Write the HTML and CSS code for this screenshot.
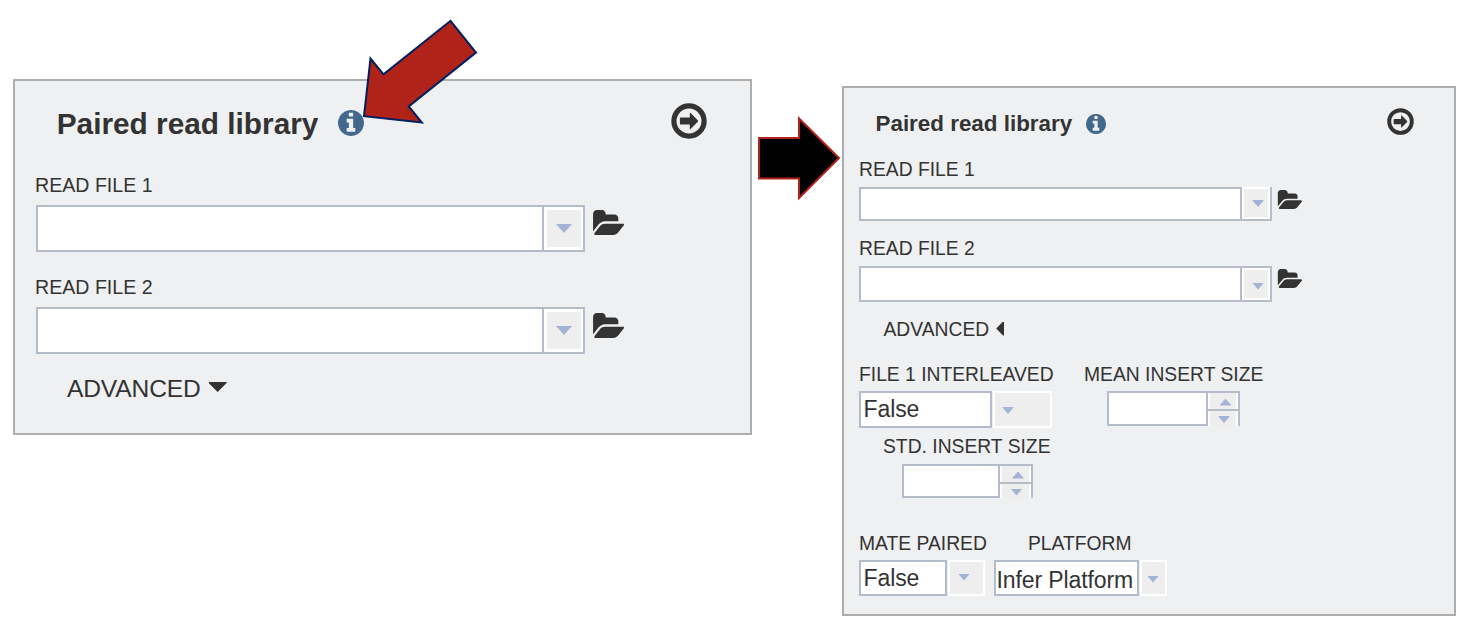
FILE: index.html
```html
<!DOCTYPE html>
<html lang="en">
<head>
<meta charset="utf-8">
<title>Paired read library</title>
<link rel="stylesheet" href="styles.css">
</head>
<body>
<svg class="defs" aria-hidden="true">
  <symbol id="info" viewBox="128 128 1536 1536"><path d="M1152 1376v-160q0-14-9-23t-23-9h-96v-512q0-14-9-23t-23-9h-320q-14 0-23 9t-9 23v160q0 14 9 23t23 9h96v320h-96q-14 0-23 9t-9 23v160q0 14 9 23t23 9h448q14 0 23-9t9-23zm-128-896v-160q0-14-9-23t-23-9h-192q-14 0-23 9t-9 23v160q0 14 9 23t23 9h192q14 0 23-9t9-23zm640 416q0 209-103 385.500t-279.500 279.500-385.500 103-385.500-103-279.500-279.500-103-385.500 103-385.500 279.500-279.500 385.500-103 385.500 103 279.500 279.500 103 385.500z"/></symbol>
  <symbol id="folder" viewBox="0 128 1943 1408" preserveAspectRatio="none"><path d="M1943 952q0 31-31 66l-336 396q-43 51-120.500 86.500t-143.500 35.500h-1088q-34 0-60.500-13t-26.500-43q0-31 31-66l336-396q43-51 120.500-86.500t143.500-35.500h1088q34 0 60.500 13t26.500 43zm-343-344v160h-832q-94 0-197 47.500t-164 119.500l-337 396-5 6q0-4-.5-12.500t-.5-12.500v-960q0-92 66-158t158-66h320q92 0 158 66t66 158v32h544q92 0 158 66t66 158z"/></symbol>
  <symbol id="go" viewBox="0 0 36 36"><circle cx="18" cy="18" r="15.100" fill="none" stroke="currentColor" stroke-width="5.200"/><path d="M9.500 14.500h9.300V10.300q0-.9.800-.4l7.200 7.400q.6.700 0 1.400l-7.200 7.400q-.8.500-.8-.4v-4.200H9.500q-.6 0-.6-.6v-5.800q0-.6.600-.6z"/></symbol>
</svg>

<main class="stage">
  <section class="panel panel-small">
    <header class="head">
      <h2 class="title">Paired read library</h2>
      <svg class="info"><use href="#info"/></svg>
      <svg class="go"><use href="#go"/></svg>
    </header>
    <div class="label">READ FILE 1</div>
    <div class="file">
      <div class="combo"><div class="entry"></div><div class="drop"><i class="tri down"></i></div></div>
      <svg class="folder"><use href="#folder"/></svg>
    </div>
    <div class="label second">READ FILE 2</div>
    <div class="file">
      <div class="combo"><div class="entry"></div><div class="drop"><i class="tri down"></i></div></div>
      <svg class="folder"><use href="#folder"/></svg>
    </div>
    <div class="advanced">ADVANCED<i class="caret caret-down"></i></div>
  </section>

  <section class="panel panel-large">
    <header class="head">
      <h2 class="title">Paired read library</h2>
      <svg class="info"><use href="#info"/></svg>
      <svg class="go"><use href="#go"/></svg>
    </header>
    <div class="label">READ FILE 1</div>
    <div class="file file-open">
      <div class="combo"><div class="entry"></div><div class="drop"><i class="tri down"></i></div></div>
      <svg class="folder"><use href="#folder"/></svg>
    </div>
    <div class="label second">READ FILE 2</div>
    <div class="file file-second">
      <div class="combo"><div class="entry"></div><div class="drop"><i class="tri down"></i></div></div>
      <svg class="folder"><use href="#folder"/></svg>
    </div>
    <div class="advanced">ADVANCED<i class="caret caret-left"></i></div>

    <div class="options">
      <div class="option interleaved">
        <div class="label">FILE 1 INTERLEAVED</div>
        <div class="select"><div class="value">False</div><div class="arrow"><i class="tri down"></i></div></div>
      </div>
      <div class="option mean">
        <div class="label">MEAN INSERT SIZE</div>
        <div class="spinner"><div class="number"></div><div class="steps"><div class="step"><i class="tri up"></i></div><div class="step"><i class="tri down"></i></div></div></div>
      </div>
    </div>
    <div class="option std">
      <div class="label">STD. INSERT SIZE</div>
      <div class="spinner"><div class="number"></div><div class="steps"><div class="step"><i class="tri up"></i></div><div class="step"><i class="tri down"></i></div></div></div>
    </div>
    <div class="options options-last">
      <div class="option mate">
        <div class="label">MATE PAIRED</div>
        <div class="select"><div class="value">False</div><div class="arrow"><i class="tri down"></i></div></div>
      </div>
      <div class="option platform">
        <div class="label">PLATFORM</div>
        <div class="select"><div class="value">Infer Platform</div><div class="arrow"><i class="tri down"></i></div></div>
      </div>
    </div>
  </section>

  <svg class="pointer" viewBox="0 0 120 110"><path d="M90.500 10.800 116 42.500 48.700 96.500 61.800 112.500 4 106.200 10.500 48.500 23.500 64.300z"/></svg>
  <svg class="next" viewBox="0 0 84 86"><path d="M2 23H42V3.500L82 43 42 83V63.500H2z"/></svg>
</main>
</body>
</html>
```
FILE: styles.css
```css
* { box-sizing: border-box; }
body {
  margin: 0;
  background: #fff;
  color: #333;
  font-family: "Liberation Sans", Arial, sans-serif;
}
.defs { position: absolute; width: 0; height: 0; }
svg { display: block; flex: none; fill: currentColor; }
.stage {
  position: relative;
  display: flex;
  align-items: flex-start;
  gap: 90px;
  width: 1472px;
  height: 632px;
  padding: 79px 0 0 13px;
  overflow: hidden;
}
.panel { flex: none; background: #eff0f2; border: 2px solid #adadad; }
.panel-small { width: 739px; height: 356px; padding-left: 21px; }
.panel-large { width: 614px; height: 530px; margin-top: 7px; padding-left: 15px; }

.head { display: flex; align-items: center; }
.title { margin: 0; font-weight: bold; white-space: nowrap; }
.info { color: #42698d; }
.label { height: 24px; line-height: 24px; white-space: nowrap; }
.file { display: flex; align-items: flex-start; }
.combo { display: flex; border: 2px solid #b5bcc9; background: #fff; }
.entry { flex: 1; background: #fff; }
.drop {
  display: flex;
  justify-content: center;
  align-items: center;
  border: 2px solid #fff;
  background: #eee;
  box-shadow: -2px 0 #b5bcc9;
}
.advanced { display: flex; align-items: center; }

.tri { display: block; width: 12px; height: 7px; background: #a2b3d3; }
.down { clip-path: polygon(0 0, 100% 0, 50% 100%); }
.up { clip-path: polygon(50% 0, 100% 100%, 0 100%); }
.caret { display: block; background: #333; }
.caret-down { clip-path: polygon(0 0, 100% 0, 100% 10%, 50% 100%, 0 10%); }
.caret-left { clip-path: polygon(100% 0, 100% 100%, 85% 100%, 0 50%, 85% 0); }

/* Collapsed panel */
.panel-small .head { height: 84px; margin-bottom: 8px; }
.panel-small .title { width: 283px; margin: 2px 0 0 20px; font-size: 29.8px; line-height: 36px; text-indent: .7px; }
.panel-small .info { width: 26px; height: 26px; margin-left: -1px; }
.panel-small .go { width: 36px; height: 36px; margin: 0 0 4px 307px; }
.panel-small .label { margin-left: -1px; font-size: 19.6px; }
.panel-small .second { margin-top: 23px; }
.panel-small .file { margin-top: 8px; }
.panel-small .combo { width: 549px; height: 47px; }
.panel-small .drop { width: 39px; border-width: 3px 2px 3px 3px; }
.panel-small .drop .tri { width: 16px; height: 9px; }
.panel-small .folder { width: 32px; height: 25px; margin: 5px 0 0 7px; }
.panel-small .file:nth-of-type(4) .folder { margin-top: 6px; }
.panel-small .advanced { height: 30px; margin: 20px 0 0 31px; font-size: 24.6px; letter-spacing: -.15px; line-height: 30px; }
.panel-small .caret { width: 18px; height: 10px; margin: 0 0 4px 8px; }

/* Expanded panel */
.panel-large .head { height: 69px; }
.panel-large .title { width: 211px; margin: 3px 0 0 16px; font-size: 22.4px; line-height: 28px; text-indent: .5px; }
.panel-large .info { width: 20px; height: 20px; margin: 2px 0 0; }
.panel-large .go { width: 27px; height: 27px; margin: 0 0 3px 281px; }
.panel-large .label { font-size: 19.3px; line-height: 26px; }
.panel-large > .second { margin-top: 15px; }
.panel-large .file { height: 34px; margin-top: 6px; }
.panel-large .file-second { height: 36px; }
.panel-large .combo { width: 413px; height: 100%; }
.panel-large .drop { width: 28px; }
.panel-large .drop .tri { margin: 4px 0 0 4px; }
.file-open .drop { margin-top: -2px; }
.file-open .drop .tri { margin-top: 1px; }
.panel-large .folder { width: 25px; height: 19px; margin: 3px 0 0 5px; }
.panel-large .advanced { height: 24px; margin: 15px 0 0 24.5px; font-size: 19.3px; line-height: 24px; padding-top: 2px; }
.panel-large .caret { width: 8px; height: 14px; margin: 0 0 3px 7px; }

.options { display: flex; margin-top: 21px; }
.select { display: flex; height: 36px; }
.value {
  border: 2px solid #b5bcc9;
  background: #fff;
  padding-left: 2.5px;
  font-size: 23px;
  letter-spacing: -.1px;
  line-height: 33px;
  white-space: nowrap;
}
.arrow {
  display: flex;
  align-items: center;
  margin-left: 1px;
  border: 2px solid #fff;
  background: #eee;
}
.interleaved { width: 225px; }
.interleaved .select { margin-top: 5px; height: 37px; }
.interleaved .value { width: 133px; }
.interleaved .arrow { width: 59px; padding: 2px 0 0 7px; }
.spinner { display: flex; height: 35px; }
.number { width: 101px; border: 2px solid #b5bcc9; background: #fff; }
.steps {
  display: grid;
  grid-template-rows: 16px 1fr;
  gap: 2px;
  width: 32px;
  border: solid #b5bcc9;
  border-width: 2px 2px 0 0;
  background: #b5bcc9;
}
.step {
  display: flex;
  justify-content: center;
  align-items: center;
  border: solid #fff;
  border-width: 0 2px;
  background: #eee;
}
.step .up { margin: 2px 0 0 5px; }
.step .down { margin: 2px 0 0 2px; }
.mean .spinner { margin: 5px 0 0 23px; }
.std { margin: 6px 0 0 24px; }
.std .spinner { height: 34px; margin: 6px 0 0 19px; }
.std .number { width: 98px; }
.std .steps { width: 33px; }
.options-last { margin-top: 33px; }
.options-last .select { margin-top: 5px; }
.mate { width: 135px; }
.mate .value { width: 88px; }
.mate .arrow { width: 37px; padding: 0 0 2px 8px; }
.platform .label { padding-left: 34px; }
.platform .value { width: 145px; padding-left: .5px; line-height: 36px; }
.platform .arrow { width: 27px; padding: 2px 0 0 5px; }

/* Callout arrows drawn over the panels */
.pointer {
  position: absolute;
  left: 360px;
  top: 10px;
  width: 120px;
  height: 110px;
  overflow: visible;
  fill: #b02318;
  stroke: #001f60;
  stroke-width: 2;
}
.next {
  position: absolute;
  left: 757px;
  top: 115px;
  width: 84px;
  height: 86px;
  fill: #000;
  stroke: #b02318;
  stroke-width: 2;
}
```
